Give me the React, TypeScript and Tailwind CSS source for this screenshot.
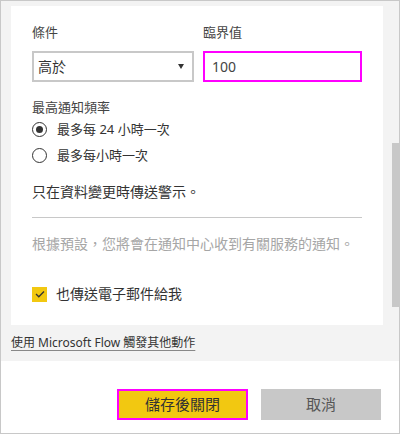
const font = "font-['Noto_Sans','Noto_Sans_CJK_TC',sans-serif]";

const Radio = ({ checked, label }: { checked?: boolean; label: string }) => (
  <div className="flex items-center h-[20px] gap-[10px]">
    <span className="w-[15px] h-[15px] rounded-full border-[1.5px] border-[#333] flex items-center justify-center">
      {checked && <span className="w-[7px] h-[7px] rounded-full bg-[#333]" />}
    </span>
    <span className="text-[13px] leading-[20px] text-[#333]">{label}</span>
  </div>
);

export default function App() {
  return (
    <div
      className={`w-[400px] h-[434px] border border-[#c8c8c8] bg-white flex flex-col overflow-hidden ${font}`}
    >
      <div className="h-[360px] bg-[#f3f3f3] flex shrink-0">
        <div className="flex-1 pl-[10px] pr-[9px] flex flex-col">
          {/* card */}
          <div className="mt-[5px] h-[319px] bg-white px-[21px] pt-[17px] flex flex-col">
            <div className="flex gap-[9px]">
              <div className="w-[162px] flex flex-col">
                <label className="text-[13px] leading-[18px] text-[#444]">條件</label>
                <div className="mt-[10px] h-[31px] border-2 border-[#c8c8c8] flex items-center justify-between pl-[4px] pr-[8px]">
                  <span className="text-[14px] text-[#333]">高於</span>
                  <svg width="6" height="5" viewBox="0 0 6 5">
                    <path d="M0 0h6L3 5z" fill="#333" />
                  </svg>
                </div>
              </div>
              <div className="flex-1 flex flex-col">
                <label className="text-[13px] leading-[18px] text-[#444]">臨界值</label>
                <div className="mt-[10px] h-[31px] border-2 border-[#ff00ff] flex items-center pl-[7px]">
                  <span className="text-[14px] text-[#444]">100</span>
                </div>
              </div>
            </div>

            <div className="mt-[16px] text-[13px] leading-[18px] text-[#444]">最高通知頻率</div>
            <div className="mt-[3px] flex flex-col gap-[6px]">
              <Radio checked label="最多每 24 小時一次" />
              <Radio label="最多每小時一次" />
            </div>

            <div className="mt-[17px] text-[14px] leading-[20px] text-[#333]">只在資料變更時傳送警示。</div>
            <div className="mt-[15px] h-px bg-[#c8c8c8]" />
            <div className="mt-[16px] text-[14px] leading-[20px] text-[#a6a6a6]">
              根據預設，您將會在通知中心收到有關服務的通知。
            </div>

            <div className="mt-[30px] flex items-center h-[20px] gap-[9px]">
              <span className="w-[15px] h-[15px] bg-[#f2c811] flex items-center justify-center">
                <svg width="10" height="8" viewBox="0 0 10 8" fill="none">
                  <path d="M1 4l2.8 2.8L9 1.5" stroke="#333" strokeWidth="1.3" />
                </svg>
              </span>
              <span className="text-[14px] leading-[20px] text-[#333]">也傳送電子郵件給我</span>
            </div>
          </div>

          <a className="mt-[9px] self-start text-[12px] leading-[18px] text-[#333] underline underline-offset-[3px] decoration-[#888]">
            使用 Microsoft Flow 觸發其他動作
          </a>
        </div>
        {/* scrollbar */}
        <div className="w-[7px] pt-[142px]">
          <div className="h-[164px] bg-[#c8c8c8]" />
        </div>
      </div>

      <div className="flex-1 flex justify-end items-start gap-[13px] pt-[28px] pr-[18px]">
        <button className="w-[131px] h-[31px] bg-[#f2c811] border-2 border-[#ff00ff] text-[15px] text-[#333]">
          儲存後關閉
        </button>
        <button className="w-[120px] h-[31px] bg-[#c8c8c8] text-[15px] text-[#555]">取消</button>
      </div>
    </div>
  );
}
